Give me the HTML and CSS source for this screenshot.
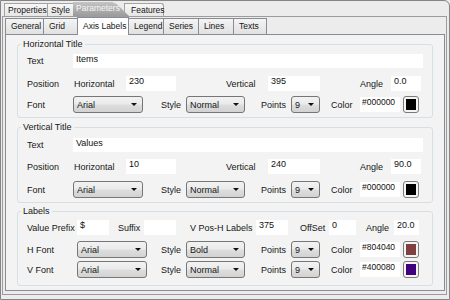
FILE: index.html
```html
<!DOCTYPE html>
<html lang="en">
<head>
    <meta charset="UTF-8">
    <title>Chart Parameters</title>
    <link rel="stylesheet" href="styles.css">
</head>
<body>
    <div class="window">
        <div class="top-tabs">
            <div class="ttab ttab-props">Properties</div>
            <div class="ttab ttab-style">Style</div>
            <div class="ttab ttab-active">Parameters</div>
            <div class="ttab ttab-last">Features</div>
        </div>

        <div class="page">
            <div class="tabs">
                <div class="tab">General</div>
                <div class="tab">Grid</div>
                <div class="tab tab-active">Axis Labels</div>
                <div class="tab">Legend</div>
                <div class="tab">Series</div>
                <div class="tab">Lines</div>
                <div class="tab">Texts</div>
            </div>

            <div class="panel">
                <!-- Horizontal title -->
                <fieldset class="group group-h">
                    <legend>Horizontal Title</legend>
                    <div class="row row-text">
                        <span class="lbl lbl-first">Text</span>
                        <span class="field f-text">Items</span>
                    </div>
                    <div class="row row-pos">
                        <span class="lbl lbl-pos">Position</span>
                        <span class="lbl lbl-horz">Horizontal</span>
                        <span class="field f-pos">230</span>
                        <span class="lbl lbl-vert">Vertical</span>
                        <span class="field f-vert">395</span>
                        <span class="lbl lbl-angle">Angle</span>
                        <span class="field f-angle">0.0</span>
                    </div>
                    <div class="row row-font">
                        <span class="lbl lbl-first">Font</span>
                        <span class="select s-font">Arial<i class="arrow"></i></span>
                        <span class="lbl lbl-style">Style</span>
                        <span class="select s-style">Normal<i class="arrow"></i></span>
                        <span class="lbl lbl-points">Points</span>
                        <span class="select s-points">9<i class="arrow"></i></span>
                        <span class="lbl lbl-color">Color</span>
                        <span class="field f-color">#000000</span>
                        <span class="swatch"><span class="swatch-fill c-black"></span></span>
                    </div>
                </fieldset>

                <!-- Vertical title -->
                <fieldset class="group group-v">
                    <legend>Vertical Title</legend>
                    <div class="row row-text">
                        <span class="lbl lbl-first">Text</span>
                        <span class="field f-text">Values</span>
                    </div>
                    <div class="row row-pos">
                        <span class="lbl lbl-pos">Position</span>
                        <span class="lbl lbl-horz">Horizontal</span>
                        <span class="field f-pos">10</span>
                        <span class="lbl lbl-vert">Vertical</span>
                        <span class="field f-vert">240</span>
                        <span class="lbl lbl-angle">Angle</span>
                        <span class="field f-angle">90.0</span>
                    </div>
                    <div class="row row-font">
                        <span class="lbl lbl-first">Font</span>
                        <span class="select s-font">Arial<i class="arrow"></i></span>
                        <span class="lbl lbl-style">Style</span>
                        <span class="select s-style">Normal<i class="arrow"></i></span>
                        <span class="lbl lbl-points">Points</span>
                        <span class="select s-points">9<i class="arrow"></i></span>
                        <span class="lbl lbl-color">Color</span>
                        <span class="field f-color">#000000</span>
                        <span class="swatch"><span class="swatch-fill c-black"></span></span>
                    </div>
                </fieldset>

                <!-- Labels -->
                <fieldset class="group group-l">
                    <legend>Labels</legend>
                    <div class="row row-prefix">
                        <span class="lbl lbl-wide">Value Prefix</span>
                        <span class="field f-short">$</span>
                        <span class="lbl lbl-suffix">Suffix</span>
                        <span class="field f-short"></span>
                        <span class="lbl lbl-vpos">V Pos-H Labels</span>
                        <span class="field f-short">375</span>
                        <span class="lbl lbl-offset">OffSet</span>
                        <span class="field f-offset">0</span>
                        <span class="lbl lbl-angle2">Angle</span>
                        <span class="field f-angle2">20.0</span>
                    </div>
                    <div class="row row-hfont">
                        <span class="lbl lbl-wide">H Font</span>
                        <span class="select s-font">Arial<i class="arrow"></i></span>
                        <span class="lbl lbl-style2">Style</span>
                        <span class="select s-style">Bold<i class="arrow"></i></span>
                        <span class="lbl lbl-points">Points</span>
                        <span class="select s-points">9<i class="arrow"></i></span>
                        <span class="lbl lbl-color">Color</span>
                        <span class="field f-color">#804040</span>
                        <span class="swatch"><span class="swatch-fill c-brown"></span></span>
                    </div>
                    <div class="row row-font">
                        <span class="lbl lbl-wide">V Font</span>
                        <span class="select s-font">Arial<i class="arrow"></i></span>
                        <span class="lbl lbl-style2">Style</span>
                        <span class="select s-style">Normal<i class="arrow"></i></span>
                        <span class="lbl lbl-points">Points</span>
                        <span class="select s-points">9<i class="arrow"></i></span>
                        <span class="lbl lbl-color">Color</span>
                        <span class="field f-color">#400080</span>
                        <span class="swatch"><span class="swatch-fill c-purple"></span></span>
                    </div>
                </fieldset>
            </div>
        </div>
    </div>
</body>
</html>
```

FILE: styles.css
```css
* {
    margin: 0;
    padding: 0;
    box-sizing: border-box;
}

body {
    font-family: "Liberation Sans", Arial, sans-serif;
    font-size: 9px;
    color: #161616;
    background-color: #ececec;
}

.window {
    width: 450px;
    height: 300px;
    border: 1px solid #858585;
    border-top-right-radius: 6px;
    padding: 0 2px 4px 1px;
    background-color: #ececec;
}

/* outer tab strip */
.top-tabs {
    display: flex;
    align-items: flex-end;
    height: 15px;
    padding-left: 2px;
}

.ttab {
    height: 13px;
    line-height: 12px;
    padding-left: 3px;
    font-size: 8.5px;
    white-space: nowrap;
    border: 1px solid #a3a3a3;
    border-bottom: none;
    background: linear-gradient(#f7f7f7, #e6e6e6);
}

.ttab + .ttab {
    margin-left: -1px;
}

.ttab-props {
    width: 44px;
}

.ttab-style {
    width: 27px;
}

.ttab-active {
    position: relative;
    z-index: 1;
    width: 56px;
    height: 14px;
    line-height: 13px;
    color: #f6f6f6;
    border: none;
    background: linear-gradient(#c4c4c4, #9b9b9b);
    clip-path: polygon(0 0, 70% 0, 78% 15%, 100% 100%, 0 100%);
}

.ttab + .ttab-last {
    width: 40px;
    margin-left: -5px;
    padding-left: 6px;
    border-top-right-radius: 3px;
}

/* inner page */
.page {
    height: 279px;
    border: 1px solid #9c9c9c;
    padding: 0 1px 3px 2px;
}

.tabs {
    display: flex;
    align-items: flex-end;
    height: 17px;
}

.tab {
    height: 16px;
    line-height: 15px;
    padding-left: 5px;
    font-size: 8.5px;
    white-space: nowrap;
    border: 1px solid #898c95;
    border-bottom: none;
    background: linear-gradient(#f4f4f4, #e1e1e1);
}

.tab + .tab {
    margin-left: -1px;
}

.tab:nth-child(1) { width: 39px; }
.tab:nth-child(2) { width: 35px; }
.tab:nth-child(3) { width: 52px; }
.tab:nth-child(4) { width: 36px; }
.tab:nth-child(5) { width: 36px; }
.tab:nth-child(6) { width: 36px; }
.tab:nth-child(7) { width: 34px; }

.tab-active {
    position: relative;
    z-index: 1;
    height: 18px;
    line-height: 17px;
    margin-bottom: -1px;
    background: #ffffff;
}

.panel {
    width: 440px;
    height: 257px;
    border: 1px solid #898c95;
    background-color: #f3f3f3;
    padding: 4px 11px 0;
}

/* group boxes */
.group {
    min-width: 0;
    border: 1px solid #d6dfe6;
    border-radius: 3px;
    padding: 5px 9px 4px;
}

.group legend {
    margin-left: -6px;
    padding: 0 2px;
    line-height: 10px;
}

.group-v {
    margin-top: 4px;
    padding-top: 6px;
}

.group-l {
    margin-top: 3px;
    padding-top: 4px;
    padding-bottom: 7px;
}

.row {
    display: flex;
    align-items: center;
}

.group-h .row-text { margin-bottom: 8px; }
.group-h .row-pos { margin-bottom: 5px; }
.group-v .row-text { margin-bottom: 7px; }
.group-v .row-pos { margin-bottom: 7px; }
.row-prefix { margin-bottom: 6px; }
.row-hfont { margin-bottom: 3px; }

.lbl {
    flex: none;
    line-height: 10px;
    white-space: nowrap;
}

.lbl-first { width: 46px; }
.lbl-pos { width: 47px; }
.lbl-horz { width: 52px; }
.lbl-vert { width: 42px; margin-left: 50px; }
.lbl-angle { width: 31px; margin-left: 40px; }
.lbl-style { width: 25px; margin-left: 18px; }
.lbl-style2 { width: 25px; margin-left: 14px; }
.lbl-points { width: 30px; margin-left: 16px; }
.lbl-color { width: 29px; margin-left: 11px; }
.lbl-wide { width: 50px; }
.lbl-suffix { width: 26px; margin-left: 9px; }
.lbl-vpos { width: 66px; margin-left: 14px; }
.lbl-offset { width: 29px; margin-left: 12px; }
.lbl-angle2 { width: 28px; margin-left: 10px; }

/* text fields */
.field {
    flex: none;
    height: 15px;
    padding-left: 3px;
    line-height: 10px;
    white-space: nowrap;
    background-color: #ffffff;
    color: #111111;
}

.f-text { width: 350px; height: 14px; }
.f-pos { width: 50px; }
.f-vert { width: 52px; }
.f-angle { width: 30px; }
.f-color { width: 40px; padding-left: 2px; font-size: 8.5px; }
.f-short { width: 32px; }
.f-offset { width: 27px; }
.f-angle2 { width: 25px; }

/* drop downs */
.select {
    flex: none;
    display: flex;
    align-items: center;
    justify-content: space-between;
    height: 17px;
    padding-left: 3px;
    border: 1px solid #767676;
    border-radius: 3px;
    background: linear-gradient(#f2f2f2, #ebebeb 45%, #dddddd 55%, #d2d2d2);
}

.s-font { width: 70px; }
.s-style { width: 59px; }
.s-points { width: 29px; }

.arrow {
    width: 0;
    height: 0;
    margin-right: 5px;
    border-left: 3px solid transparent;
    border-right: 3px solid transparent;
    border-top: 3px solid #111111;
}

.swatch {
    flex: none;
    width: 16px;
    height: 17px;
    margin-left: 3px;
    padding: 2px;
    border: 1px solid #7a7a7a;
    border-radius: 3px;
    background-color: #f4f4f4;
}

.swatch-fill {
    display: block;
    width: 100%;
    height: 100%;
}

.c-black { background-color: #000000; }
.c-brown { background-color: #804040; }
.c-purple { background-color: #400080; }
```
